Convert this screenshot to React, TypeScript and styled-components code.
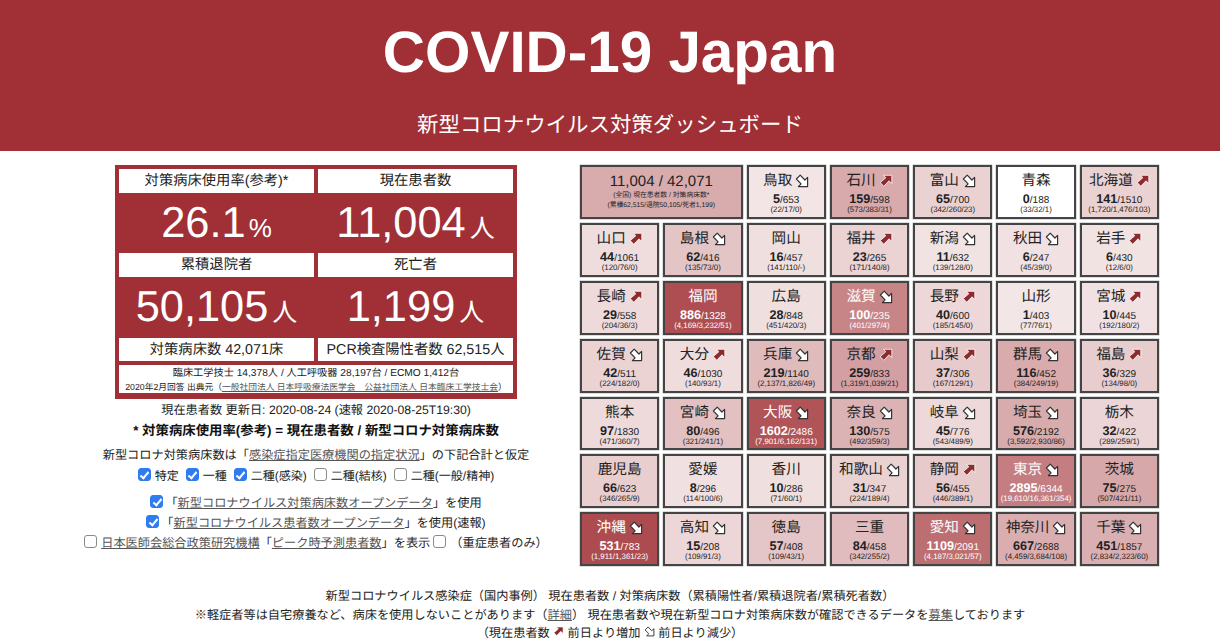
import React from "react";
import styled, { createGlobalStyle } from "styled-components";

const CJK = `"Liberation Sans", "Noto Sans CJK JP", sans-serif`;
const RED = "#a03035";

const Global = createGlobalStyle`
  html, body { margin: 0; padding: 0; background: #fff; }
  body { font-family: ${CJK}; color: #222; overflow: hidden; height: 640px; text-rendering: geometricPrecision; }
  a { color: #555; }
`;

const Page = styled.div`
  width: 1220px;
  height: 640px;
  overflow: hidden;
`;
const Header = styled.header`
  height: 151px;
  background: ${RED};
  color: #fff;
  text-align: center;
`;
const Title = styled.h1`
  margin: 0;
  padding-top: 18px;
  font-size: 58.4px;
  line-height: 70px;
  font-weight: 700;
`;
const Subtitle = styled.div`
  margin-top: 24px;
  font-size: 21.45px;
  line-height: 26px;
`;
const Main = styled.main`
  display: flex;
  gap: 14px;
  padding: 14px 0 0 66px;
`;
const Left = styled.section`
  width: 500px;
  display: flex;
  flex-direction: column;
  align-items: center;
`;
const Panel = styled.div`
  width: 402px;
  height: 234px;
  box-sizing: border-box;
  background: ${RED};
  padding: 4px;
  display: grid;
  grid-template-columns: 1fr 1fr;
  grid-template-rows: 24px 60px 24px 61px 23px 31px;
  gap: 0 4px;
`;
const Label = styled.div`
  background: #fff;
  text-align: center;
  font-size: 14.3px;
  line-height: 25px;
  color: #222;
  white-space: nowrap;
`;
const Value = styled.div`
  color: #fff;
  text-align: center;
  font-size: 43.4px;
  line-height: 61px;
  white-space: nowrap;
`;
const Unit = styled.span<{ $pct?: boolean }>`
  font-size: ${(p) => (p.$pct ? "26px" : "25px")};
  margin-left: ${(p) => (p.$pct ? "3px" : "4px")};
`;
const Foot = styled.div`
  grid-column: 1 / 3;
  margin-top: 4px;
  height: 27px;
  padding-top: 1px;
  box-sizing: content-box;
  background: #fff;
  text-align: center;
  color: #222;
  margin-bottom: -1px;
`;
const FootTop = styled.div`
  font-size: 10.2px;
  line-height: 15px;
`;
const FootBottom = styled.div`
  font-size: 8.75px;
  line-height: 13px;
  white-space: nowrap;
`;
const Updated = styled.div`
  margin-top: 3px;
  font-size: 12.2px;
  line-height: 16px;
`;
const Bold = styled.div`
  margin-top: 4px;
  font-size: 13.4px;
  line-height: 18px;
  font-weight: 700;
  color: #111;
`;
const Assume = styled.div`
  margin-top: 7px;
  font-size: 12.2px;
  line-height: 16px;
  white-space: nowrap;
`;
const OptRow = styled.div`
  margin-top: 3px;
  font-size: 12px;
  line-height: 20px;
  white-space: nowrap;
  display: flex;
  align-items: center;
  gap: 7px;
`;
const Line = styled.div<{ $top: number; $gap: number }>`
  margin-top: ${(p) => p.$top}px;
  font-size: 12.2px;
  line-height: 20px;
  white-space: nowrap;
  display: flex;
  align-items: center;
  gap: ${(p) => p.$gap}px;
`;
const Check = styled.input.attrs({ type: "checkbox", readOnly: true })`
  appearance: none;
  width: 13px;
  height: 13px;
  margin: 0 1px 3px 0;
  box-sizing: border-box;
  border: 1px solid #8a8a8a;
  border-radius: 3px;
  background: #fff;
  position: relative;
  flex: none;
  &:checked {
    background: #2f7cf0;
    border-color: #2f7cf0;
  }
  &:checked::after {
    content: "";
    position: absolute;
    left: 3.5px;
    top: 0.5px;
    width: 3px;
    height: 7px;
    border: solid #fff;
    border-width: 0 2px 2px 0;
    transform: rotate(40deg);
  }
`;
const Opt = styled.label`
  display: inline-flex;
  align-items: center;
  gap: 3px;
`;

const Grid = styled.section`
  width: 579px;
  display: grid;
  grid-template-columns: repeat(7, 1fr);
  grid-auto-rows: 53.9px;
  gap: 4px;
`;
const Cell = styled.div<{ $ratio: number; $wide?: boolean }>`
  grid-column: ${(p) => (p.$wide ? "span 2" : "auto")};
  box-sizing: border-box;
  border: 2px solid #444;
  box-shadow: 0 0 0 0.5px #bbb;
  background: ${(p) =>
    p.$ratio === 0 ? "#fff" : `rgba(160,48,53,${Math.min(1, 0.12 + p.$ratio * 1.1)})`};
  color: ${(p) => (p.$ratio > 0.4 ? "#fff" : "#222")};
  text-align: center;
  display: flex;
  flex-direction: column;
  align-items: center;
  overflow: hidden;
  white-space: nowrap;
`;
const Name = styled.div`
  margin-top: 4px;
  font-size: 14.6px;
  line-height: 20px;
  height: 20px;
  display: flex;
  align-items: center;
  gap: 3px;
`;
const Counts = styled.div`
  margin-top: 1px;
  font-size: 10px;
  line-height: 14px;
  height: 14px;
`;
const Big = styled.b`
  font-size: 12.6px;
`;
const Sub = styled.div`
  margin-top: -1px;
  font-size: 7.85px;
  line-height: 10px;
`;
const WideTop = styled.div`
  margin-top: 6px;
  font-size: 15px;
  line-height: 18px;
`;
const WideSub = styled.div`
  font-size: 6.8px;
  line-height: 10px;
`;
const Notes = styled.footer`
  margin-top: 21px;
  text-align: center;
  font-size: 12.2px;
  line-height: 18.5px;
  white-space: nowrap;
  color: #222;
`;
const Glyph = styled.svg`
  flex: none;
  display: inline-block;
`;

const Arrow = ({ up, size = 14 }: { up: boolean; size?: number }) =>
  up ? (
    <Glyph width={size} height={size} viewBox="0 0 14 14">
      <path
        d="M4.6 1.3 H12.8 V9.6 L10 6.8 L4.8 12.2 L1.2 8.6 L6.8 3.8 Z"
        fill="#8c2a2e"
        stroke="#fff"
        strokeWidth="0.8"
        strokeLinejoin="round"
      />
    </Glyph>
  ) : (
    <Glyph width={size} height={size} viewBox="0 0 14 14">
      <path
        d="M3.4 12.6 H12.6 V3.4 L9.9 6 L5.2 1.2 L1.4 5 L6.1 9.8 Z"
        fill="#fff"
        stroke="#333"
        strokeWidth="1.2"
        strokeLinejoin="round"
      />
    </Glyph>
  );

type P = [string, string, string, string, ("u" | "d")?];
const rows: P[] = [
  ["鳥取", "5", "653", "22/17/0", "d"],
  ["石川", "159", "598", "573/383/31", "u"],
  ["富山", "65", "700", "342/260/23", "d"],
  ["青森", "0", "188", "33/32/1"],
  ["北海道", "141", "1510", "1,720/1,476/103", "u"],
  ["山口", "44", "1061", "120/76/0", "u"],
  ["島根", "62", "416", "135/73/0", "d"],
  ["岡山", "16", "457", "141/110/-"],
  ["福井", "23", "265", "171/140/8", "u"],
  ["新潟", "11", "632", "139/128/0", "d"],
  ["秋田", "6", "247", "45/39/0", "d"],
  ["岩手", "6", "430", "12/6/0", "u"],
  ["長崎", "29", "558", "204/36/3", "u"],
  ["福岡", "886", "1328", "4,169/3,232/51"],
  ["広島", "28", "848", "451/420/3"],
  ["滋賀", "100", "235", "401/297/4", "d"],
  ["長野", "40", "600", "185/145/0", "u"],
  ["山形", "1", "403", "77/76/1"],
  ["宮城", "10", "445", "192/180/2", "u"],
  ["佐賀", "42", "511", "224/182/0", "d"],
  ["大分", "46", "1030", "140/93/1", "u"],
  ["兵庫", "219", "1140", "2,137/1,826/49", "d"],
  ["京都", "259", "833", "1,319/1,039/21", "u"],
  ["山梨", "37", "306", "167/129/1", "u"],
  ["群馬", "116", "452", "384/249/19", "d"],
  ["福島", "36", "329", "134/98/0", "u"],
  ["熊本", "97", "1830", "471/360/7"],
  ["宮崎", "80", "496", "321/241/1", "d"],
  ["大阪", "1602", "2486", "7,901/6,162/131", "d"],
  ["奈良", "130", "575", "492/359/3", "d"],
  ["岐阜", "45", "776", "543/489/9", "d"],
  ["埼玉", "576", "2192", "3,592/2,930/86", "d"],
  ["栃木", "32", "422", "289/259/1"],
  ["鹿児島", "66", "623", "346/265/9"],
  ["愛媛", "8", "296", "114/100/6"],
  ["香川", "10", "286", "71/60/1"],
  ["和歌山", "31", "347", "224/189/4", "d"],
  ["静岡", "56", "455", "446/389/1", "u"],
  ["東京", "2895", "6344", "19,610/16,361/354", "d"],
  ["茨城", "75", "275", "507/421/11"],
  ["沖縄", "531", "783", "1,911/1,361/23", "d"],
  ["高知", "15", "208", "109/91/3", "d"],
  ["徳島", "57", "408", "109/43/1"],
  ["三重", "84", "458", "342/255/2"],
  ["愛知", "1109", "2091", "4,187/3,021/57", "d"],
  ["神奈川", "667", "2688", "4,459/3,684/108", "d"],
  ["千葉", "451", "1857", "2,834/2,323/60", "d"],
];

export default function App() {
  return (
    <Page>
      <Global />
      <Header>
        <Title>COVID-19 Japan</Title>
        <Subtitle>新型コロナウイルス対策ダッシュボード</Subtitle>
      </Header>
      <Main>
        <Left>
          <Panel>
            <Label>対策病床使用率(参考)*</Label>
            <Label>現在患者数</Label>
            <Value>26.1<Unit $pct>%</Unit></Value>
            <Value>11,004<Unit>人</Unit></Value>
            <Label>累積退院者</Label>
            <Label>死亡者</Label>
            <Value>50,105<Unit>人</Unit></Value>
            <Value>1,199<Unit>人</Unit></Value>
            <Label>対策病床数 42,071床</Label>
            <Label>PCR検査陽性者数 62,515人</Label>
            <Foot>
              <FootTop>臨床工学技士 14,378人 / 人工呼吸器 28,197台 / ECMO 1,412台</FootTop>
              <FootBottom>
                2020年2月回答 出典元（<a href="#">一般社団法人 日本呼吸療法医学会　公益社団法人 日本臨床工学技士会</a>）
              </FootBottom>
            </Foot>
          </Panel>
          <Updated>現在患者数 更新日: 2020-08-24 (速報 2020-08-25T19:30)</Updated>
          <Bold>* 対策病床使用率(参考) = 現在患者数 / 新型コロナ対策病床数</Bold>
          <Assume>
            新型コロナ対策病床数は「<a href="#">感染症指定医療機関の指定状況</a>」の下記合計と仮定
          </Assume>
          <OptRow>
            <Opt><Check defaultChecked />特定</Opt>
            <Opt><Check defaultChecked />一種</Opt>
            <Opt><Check defaultChecked />二種(感染)</Opt>
            <Opt><Check />二種(結核)</Opt>
            <Opt><Check />二種(一般/精神)</Opt>
          </OptRow>
          <Line $top={7} $gap={1}>
            <Check defaultChecked />
            <span>「<a href="#">新型コロナウイルス対策病床数オープンデータ</a>」を使用</span>
          </Line>
          <Line $top={0} $gap={1}>
            <Check defaultChecked />
            <span>「<a href="#">新型コロナウイルス患者数オープンデータ</a>」を使用(速報)</span>
          </Line>
          <Line $top={0} $gap={3}>
            <Check />
            <span><a href="#">日本医師会総合政策研究機構</a>「<a href="#">ピーク時予測患者数</a>」を表示</span>
            <Check />
            <span>（重症患者のみ）</span>
          </Line>
        </Left>
        <Grid>
          <Cell $wide $ratio={11004 / 42071}>
            <WideTop>11,004 / 42,071</WideTop>
            <WideSub>(全国) 現在患者数 / 対策病床数*</WideSub>
            <WideSub>(累積62,515/退院50,105/死者1,199)</WideSub>
          </Cell>
          {rows.map(([name, cur, beds, sub, dir]) => (
            <Cell key={name} $ratio={Number(cur) / Number(beds)}>
              <Name>
                {name}
                {dir && <Arrow up={dir === "u"} />}
              </Name>
              <Counts>
                <Big>{cur}</Big>/{beds}
              </Counts>
              <Sub>({sub})</Sub>
            </Cell>
          ))}
        </Grid>
      </Main>
      <Notes>
        <div>新型コロナウイルス感染症（国内事例） 現在患者数 / 対策病床数（累積陽性者/累積退院者/累積死者数）</div>
        <div>
          ※軽症者等は自宅療養など、病床を使用しないことがあります（<a href="#">詳細</a>） 現在患者数や現在新型コロナ対策病床数が確認できるデータを<a href="#">募集</a>しております
        </div>
        <div>
          （現在患者数 <Arrow up size={11} /> 前日より増加 <Arrow up={false} size={11} /> 前日より減少）
        </div>
      </Notes>
    </Page>
  );
}
